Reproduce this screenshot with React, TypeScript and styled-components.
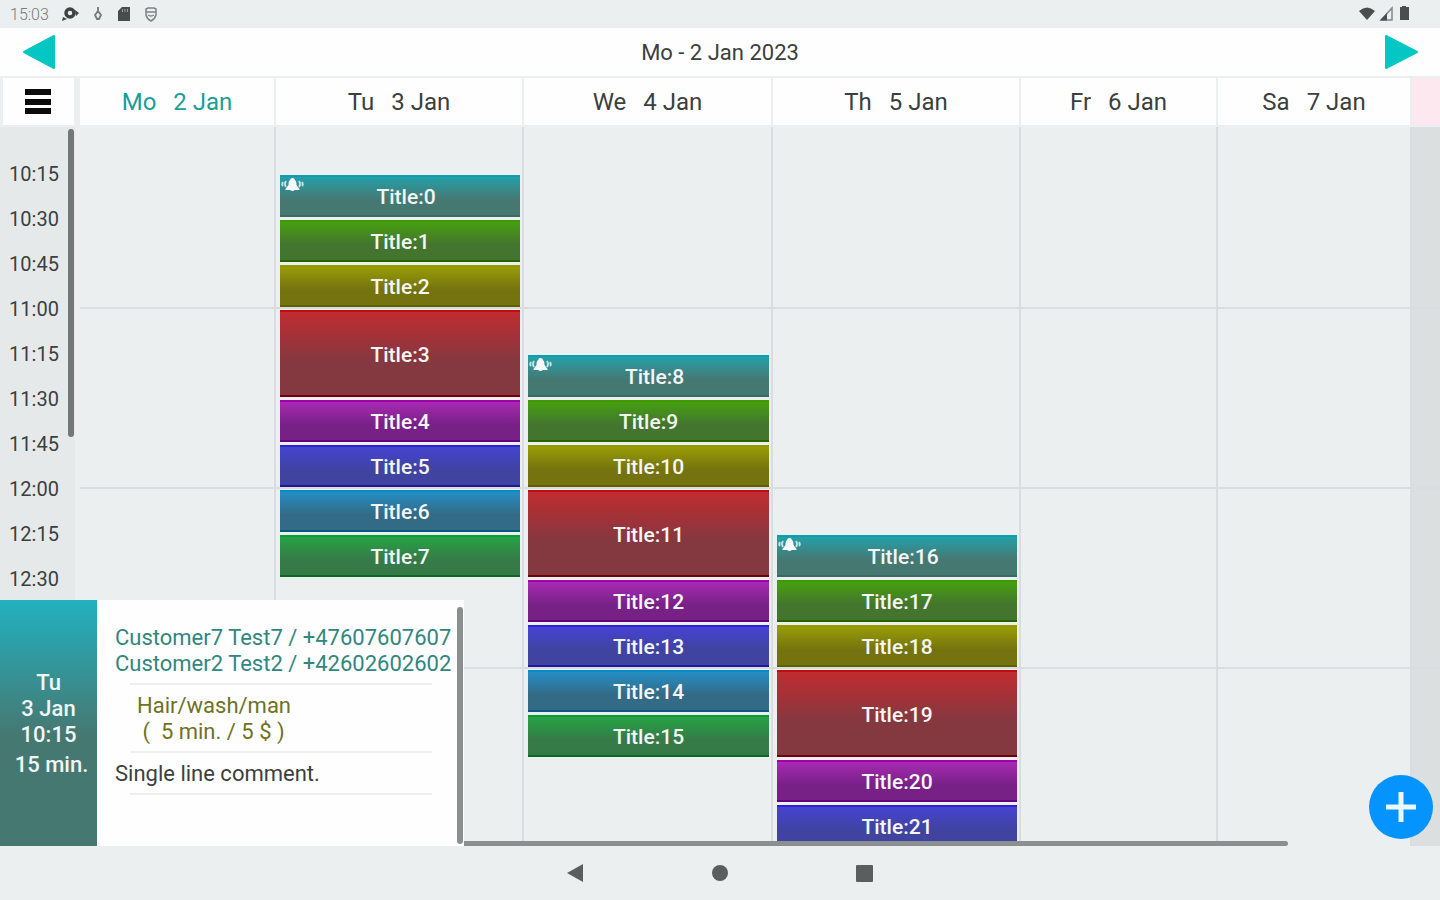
import React from "react";
import styled, { createGlobalStyle } from "styled-components";

const GlobalStyle = createGlobalStyle`
  * { box-sizing: border-box; }
  body { margin: 0; background: #ebeff0; color: #3c3f40; font-family: Roboto, "Liberation Sans", sans-serif; }
  button { font: inherit; color: inherit; border: 0; padding: 0; background: none; cursor: pointer; }
  p { margin: 0; }
`;

const COLUMNS = "78px 196fr 248fr 249fr 248fr 197fr 194fr 30fr";

const Screen = styled.div`
  display: flex;
  flex-direction: column;
  height: 100vh;
  min-height: 600px;
  overflow: hidden;
`;

const StatusBar = styled.header`
  flex: none;
  display: flex;
  align-items: center;
  justify-content: space-between;
  height: 28px;
  padding: 0 29px 0 10px;
  color: #77797a;
  font-size: 16px;
`;

const StatusGroup = styled.div<{ $gap: number }>`
  display: flex;
  align-items: center;
  gap: ${(p) => p.$gap}px;
`;

const Clock = styled.time`
  width: 38px;
  font-weight: 300;
`;

const TitleBar = styled.nav`
  flex: none;
  display: flex;
  align-items: center;
  justify-content: space-between;
  height: 48px;
  padding: 0 20px;
  background: #fefefe;
`;

const ArrowButton = styled.button`
  display: flex;
  width: 36px;
  height: 36px;
  color: #04c6c4;
`;

const WeekTitle = styled.h1`
  margin: 0;
  font-size: 22px;
  font-weight: 400;
`;

const DayHeader = styled.div`
  flex: none;
  display: grid;
  grid-template-columns: ${COLUMNS};
  height: 51px;
  padding: 2px 0;
`;

const MenuButton = styled.button`
  display: grid;
  place-items: center;
  margin: 0 4px 0 3px;
  padding-right: 2px;
  background: #fefefe;
`;

const DayName = styled.div<{ $today?: boolean; $sunday?: boolean }>`
  display: flex;
  align-items: center;
  justify-content: center;
  gap: 17px;
  overflow: hidden;
  border-left: 2px solid #ebeff0;
  background: ${(p) => (p.$sunday ? "#fce8ee" : "#fefefe")};
  color: ${(p) => (p.$today ? "#1a9e98" : "#3c3f40")};
  font-size: 24px;
`;

const Main = styled.main`
  position: relative;
  flex: 1;
  min-height: 0;
  display: flex;
  flex-direction: column;
`;

const Calendar = styled.div`
  flex: 1;
  min-height: 0;
  display: grid;
  grid-template-columns: ${COLUMNS};
  overflow: hidden;
`;

const TimeColumn = styled.div`
  display: flex;
  flex-direction: column;
  min-height: 0;
  margin-right: 3px;
  padding-top: 25px;
  background: #e6e9ea;
`;

const TimeLabel = styled.time`
  flex: none;
  width: 68px;
  line-height: 45px;
  text-align: center;
  font-size: 20px;
`;

const DayColumn = styled.div<{ $first?: boolean; $sunday?: boolean }>`
  display: grid;
  grid-template-rows: repeat(16, 45px);
  min-width: 0;
  min-height: 0;
  padding-top: 47px;
  border-left: 2px solid ${(p) => (p.$first ? "transparent" : "#dadddf")};
  background: ${(p) => (p.$sunday ? "#dcdfe0" : "transparent")};
`;

const HourLine = styled.div<{ $row: number }>`
  grid-area: ${(p) => p.$row} / 1;
  align-self: end;
  height: 2px;
  background: #dadddf;
`;

const Event = styled.button<{ $row: number; $span: number; $tone: Tone; $alarm: boolean }>`
  position: relative;
  grid-area: ${(p) => p.$row} / 1 / span ${(p) => p.$span};
  margin: 1px 2px 2px 4px;
  padding: 2px 0 0 ${(p) => (p.$alarm ? 12 : 0)}px;
  border-top: 2px solid ${(p) => p.$tone[0]};
  border-bottom: 2px solid ${(p) => p.$tone[3]};
  background: linear-gradient(${(p) => p.$tone[1]}, ${(p) => p.$tone[2]} 60%);
  color: #f4f6f6;
  font-size: 21px;
  font-weight: 500;
`;

const AlarmBadge = styled.svg`
  position: absolute;
  top: 0;
  left: 0;
`;

const ScrollThumb = styled.div<{ $place: "times" | "week" | "detail" }>`
  position: absolute;
  border-radius: 3px;
  background: ${(p) => (p.$place === "times" ? "#747677" : "#8c8f90")};
  ${(p) =>
    ({
      times: "top: 2px; left: 68px; width: 6px; height: 308px;",
      week: "bottom: 0; left: 460px; right: 152px; height: 5px;",
      detail: "top: 7px; bottom: 2px; right: 1px; width: 6px;",
    })[p.$place]}
`;

const Detail = styled.aside`
  position: absolute;
  left: 0;
  bottom: 0;
  display: flex;
  width: 464px;
  height: 246px;
  background: #fefefe;
`;

const DetailWhen = styled.div`
  display: flex;
  flex-direction: column;
  align-items: center;
  width: 97px;
  padding-top: 70px;
  background: linear-gradient(#22b1bf, #467872 55%);
  color: #f0f5f5;
  font-size: 22px;
  line-height: 26px;
  font-weight: 500;
`;

const Duration = styled.span`
  margin-top: 4px;
  padding-left: 6px;
`;

const DetailBody = styled.div`
  flex: 1;
  padding: 25px 0 0 18px;
  font-size: 22px;
  line-height: 26px;
  white-space: pre;
`;

const Customer = styled.p`
  color: #318680;
`;

const Service = styled.p`
  padding-left: 22px;
  color: #6d7224;
`;

const Rule = styled.hr`
  width: 302px;
  height: 2px;
  margin: 6px 0 8px 15px;
  border: 0;
  background: #eeefef;
`;

const AddButton = styled.button`
  position: absolute;
  right: 7px;
  bottom: 7px;
  display: grid;
  place-items: center;
  width: 64px;
  height: 64px;
  border-radius: 50%;
  background: #0593fe;
`;

const SystemNav = styled.footer`
  flex: none;
  display: flex;
  align-items: center;
  justify-content: center;
  gap: 120px;
  height: 54px;
  color: #5b5e5f;
`;

const NavButton = styled.button`
  display: flex;
  width: 24px;
  height: 24px;
`;

type Tone = [string, string, string, string];

const teal: Tone = ["#0c9eac", "#24a0a9", "#467872", "#376b65"];
const green: Tone = ["#3f9a00", "#46a010", "#43752f", "#246300"];
const olive: Tone = ["#969800", "#989c06", "#74730f", "#5f6000"];
const red: Tone = ["#bd0d0d", "#c02c30", "#843840", "#740000"];
const purple: Tone = ["#a000aa", "#a82ab2", "#772187", "#64007a"];
const blue: Tone = ["#2a22d4", "#4543d2", "#4043a0", "#1b1996"];
const azure: Tone = ["#078bc6", "#258ec4", "#336a86", "#075a7e"];
const leaf: Tone = ["#0c9c35", "#25a344", "#367a48", "#0b6a22"];
const tones = [teal, green, olive, red, purple, blue, azure, leaf];
const spans = [1, 1, 1, 2, 1, 1, 1, 1];
const offsets = [0, 1, 2, 3, 5, 6, 7, 8];

interface Day {
  name: string;
  date: string;
  firstRow?: number;
  firstTitle?: number;
  count?: number;
}

const days: Day[] = [
  { name: "Mo", date: "2 Jan" },
  { name: "Tu", date: "3 Jan", firstRow: 1, firstTitle: 0, count: 8 },
  { name: "We", date: "4 Jan", firstRow: 5, firstTitle: 8, count: 8 },
  { name: "Th", date: "5 Jan", firstRow: 9, firstTitle: 16, count: 6 },
  { name: "Fr", date: "6 Jan" },
  { name: "Sa", date: "7 Jan" },
  { name: "", date: "" },
];

const times = ["10:15", "10:30", "10:45", "11:00", "11:15", "11:30", "11:45", "12:00", "12:15", "12:30"];

function dayEvents(day: Day) {
  return Array.from({ length: day.count ?? 0 }, (_, i) => (
    <Event key={i} $row={(day.firstRow ?? 1) + offsets[i]} $span={spans[i]} $tone={tones[i]} $alarm={i === 0}>
      {i === 0 && (
        <AlarmBadge width="24" height="16" viewBox="0 0 24 16" fill="#f6fafa" aria-hidden="true">
          <path d="M12.500 1c-1.500 0-2 .8-2.200 1.800C8.800 3.800 8.500 5.500 8.500 8L5.500 12v1h5c.5 1.300 3.500 1.300 4 0h5v-1l-3-4c0-2.500-.3-4.200-1.800-5.200C14.500 1.800 14 1 12.500 1z" />
          <path d="M6 4q-2 3 0 6M3 5q-1.500 2.500 0 4M19 4q2 3 0 6M22 5q1.500 2.500 0 4" fill="none" stroke="#c4e0e2" strokeWidth="2" />
        </AlarmBadge>
      )}
      Title:{(day.firstTitle ?? 0) + i}
    </Event>
  ));
}

export default function App() {
  return (
    <Screen>
      <GlobalStyle />
      <StatusBar>
        <StatusGroup $gap={13}>
          <Clock>15:03</Clock>
          <svg width="18" height="16" viewBox="0 0 18 16" aria-hidden="true">
            <circle cx="9" cy="7" r="4" fill="none" stroke="#3f4243" strokeWidth="3.500" />
            <path d="M1 15l1-4 4 2zM14 4l4 3-3 3z" fill="#3f4243" />
          </svg>
          <svg width="12" height="16" viewBox="0 0 12 16" fill="none" stroke="#77797a" strokeWidth="1.800" aria-hidden="true">
            <path d="M6 1v4M6 5l3 4-2 4H5L3 9z" />
          </svg>
          <svg width="14" height="16" viewBox="0 0 14 16" aria-hidden="true">
            <path d="M5 1h8v14H1V5z" fill="#494c4d" />
            <path d="M5.500 3v3M8 3v3M10.500 3v3" stroke="#9a9d9e" />
          </svg>
          <svg width="14" height="16" viewBox="0 0 14 16" fill="none" stroke="#808384" strokeWidth="1.500" aria-hidden="true">
            <path d="M2 3l2-1h6l2 1v6q-1 4-5 6-4-2-5-6zM2 6h10M4 9q3 2 6 0" />
          </svg>
        </StatusGroup>
        <StatusGroup $gap={3}>
          <svg width="18" height="16" viewBox="0 0 18 16" aria-hidden="true">
            <path d="M1 5q8-7 16 0L9 14z" fill="#4b4e4f" />
          </svg>
          <svg width="15" height="16" viewBox="0 0 15 16" aria-hidden="true">
            <path d="M13 2v12H2z" fill="none" stroke="#85888a" strokeWidth="1.500" />
            <path d="M8 7v7.500H1z" fill="#4b4e4f" />
          </svg>
          <svg width="14" height="16" viewBox="0 0 14 16" aria-hidden="true">
            <path d="M5 0h4v1h3v13H3V1h2z" fill="#4b4e4f" />
          </svg>
        </StatusGroup>
      </StatusBar>

      <TitleBar aria-label="Week">
        <ArrowButton aria-label="Previous week">
          <svg width="36" height="36" viewBox="0 0 36 36" fill="currentColor" stroke="currentColor" strokeWidth="2" strokeLinejoin="round">
            <path d="M34 2v32L4 18z" />
          </svg>
        </ArrowButton>
        <WeekTitle>Mo - 2 Jan 2023</WeekTitle>
        <ArrowButton aria-label="Next week">
          <svg width="36" height="36" viewBox="0 0 36 36" fill="currentColor" stroke="currentColor" strokeWidth="2" strokeLinejoin="round">
            <path d="M2 2v32l31-16z" />
          </svg>
        </ArrowButton>
      </TitleBar>

      <DayHeader>
        <MenuButton aria-label="Menu">
          <svg width="26" height="26" viewBox="0 0 26 26" fill="#0b0b0b">
            <path d="M0 0h26v6H0zM0 10h26v6H0zM0 19h26v6H0z" />
          </svg>
        </MenuButton>
        {days.map((day, i) => (
          <DayName key={i} $today={i === 0} $sunday={i === 6}>
            <span>{day.name}</span>
            <span>{day.date}</span>
          </DayName>
        ))}
      </DayHeader>

      <Main>
        <Calendar>
          <TimeColumn>
            {times.map((time) => (
              <TimeLabel key={time}>{time}</TimeLabel>
            ))}
          </TimeColumn>
          {days.map((day, i) => (
            <DayColumn key={i} $first={i === 0} $sunday={i === 6}>
              {[3, 7, 11].map((row) => (
                <HourLine key={row} $row={row} />
              ))}
              {dayEvents(day)}
            </DayColumn>
          ))}
        </Calendar>
        <ScrollThumb $place="times" />
        <ScrollThumb $place="week" />
        <Detail>
          <DetailWhen>
            <span>Tu</span>
            <span>3 Jan</span>
            <span>10:15</span>
            <Duration>15 min.</Duration>
          </DetailWhen>
          <DetailBody>
            <Customer>Customer7 Test7 / +47607607607</Customer>
            <Customer>Customer2 Test2 / +42602602602</Customer>
            <Rule />
            <Service>Hair/wash/man</Service>
            <Service>{" (  5 min. / 5 $ )"}</Service>
            <Rule />
            <p>Single line comment.</p>
            <Rule />
          </DetailBody>
          <ScrollThumb $place="detail" />
        </Detail>
        <AddButton aria-label="Add appointment">
          <svg width="30" height="30" viewBox="0 0 30 30" stroke="#eef7ff" strokeWidth="5">
            <path d="M15 0v30M0 15h30" />
          </svg>
        </AddButton>
      </Main>

      <SystemNav>
        <NavButton aria-label="Back">
          <svg width="24" height="24" viewBox="0 0 24 24" fill="currentColor">
            <path d="M19 3v18L3 12z" />
          </svg>
        </NavButton>
        <NavButton aria-label="Home">
          <svg width="24" height="24" viewBox="0 0 24 24" fill="currentColor">
            <circle cx="12" cy="12" r="8" />
          </svg>
        </NavButton>
        <NavButton aria-label="Recent apps">
          <svg width="24" height="24" viewBox="0 0 24 24" fill="currentColor">
            <rect x="4" y="4" width="17" height="17" rx="1" />
          </svg>
        </NavButton>
      </SystemNav>
    </Screen>
  );
}
